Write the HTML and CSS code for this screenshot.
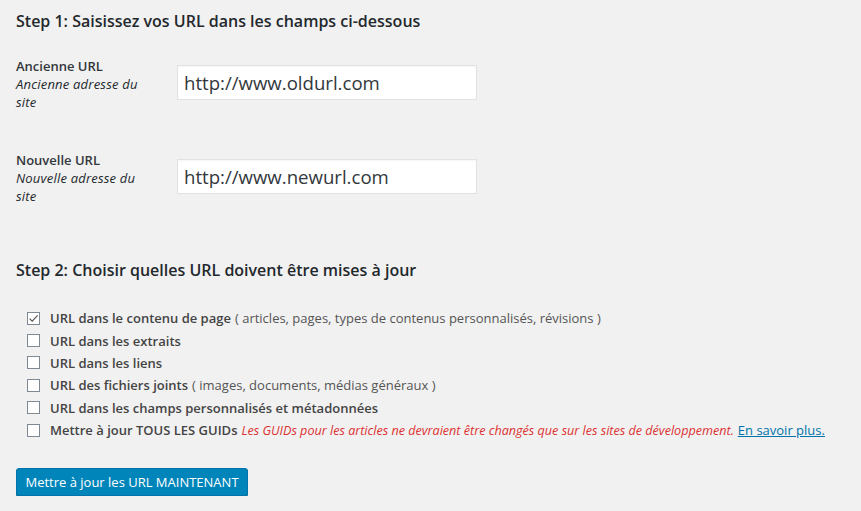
FILE: index.html
```html
<!DOCTYPE html>
<html lang="fr">
<head>
<meta charset="utf-8">
<title>Mise à jour des URL</title>
<link rel="stylesheet" href="styles.css">
</head>
<body>
<main class="page">
  <h2 class="step">Step 1: Saisissez vos URL dans les champs ci-dessous</h2>

  <div class="field">
    <div class="field-label">
      <span class="field-name">Ancienne URL</span>
      <span class="field-hint">Ancienne adresse du site</span>
    </div>
    <input class="url-input" type="text" value="http://www.oldurl.com">
  </div>

  <div class="field field-second">
    <div class="field-label">
      <span class="field-name">Nouvelle URL</span>
      <span class="field-hint">Nouvelle adresse du site</span>
    </div>
    <input class="url-input" type="text" value="http://www.newurl.com">
  </div>

  <h2 class="step step-two">Step 2: Choisir quelles URL doivent être mises à jour</h2>

  <ul class="options">
    <li class="option">
      <span class="box checked"><svg viewBox="0 0 13 13" width="13" height="13"><path d="M2.6 6.6 L5.2 9.2 L10.6 3.4" fill="none" stroke="#555" stroke-width="1.2"/></svg></span>
      <span class="opt-name">URL dans le contenu de page</span>
      <span class="opt-note">( articles, pages, types de contenus personnalisés, révisions )</span>
    </li>
    <li class="option">
      <span class="box"></span>
      <span class="opt-name">URL dans les extraits</span>
    </li>
    <li class="option">
      <span class="box"></span>
      <span class="opt-name">URL dans les liens</span>
    </li>
    <li class="option">
      <span class="box"></span>
      <span class="opt-name">URL des fichiers joints</span>
      <span class="opt-note">( images, documents, médias généraux )</span>
    </li>
    <li class="option">
      <span class="box"></span>
      <span class="opt-name">URL dans les champs personnalisés et métadonnées</span>
    </li>
    <li class="option">
      <span class="box"></span>
      <span class="opt-name">Mettre à jour TOUS LES GUIDs</span>
      <span class="opt-warn">Les GUIDs pour les articles ne devraient être changés que sur les sites de développement.</span>
      <a class="opt-link" href="#">En savoir plus.</a>
    </li>
  </ul>

  <button class="submit" type="button">Mettre à jour les URL MAINTENANT</button>
</main>
</body>
</html>
```

FILE: styles.css
```css
html, body {
  margin: 0;
  padding: 0;
  background: #f1f1f1;
}

body {
  font-family: "Open Sans", "Noto Sans", sans-serif;
  color: #444;
  font-size: 13px;
}

.page {
  padding: 10px 0 0 16px;
}

.step {
  margin: 0;
  font-size: 16px;
  line-height: 22px;
  font-weight: 600;
  color: #23282d;
}

.step-two {
  margin-top: 54px;
}

.field {
  display: flex;
  align-items: flex-start;
  margin-top: 25px;
}

.field-second {
  margin-top: 40px;
}

.field-label {
  width: 161px;
  flex: none;
  display: flex;
  flex-direction: column;
  line-height: 18px;
}

.field-name {
  font-weight: 600;
  color: #32373c;
}

.field-hint {
  font-style: italic;
  width: 132px;
  color: #23282d;
  letter-spacing: 0.2px;
}

.url-input {
  margin: 8px 0 0 0;
  box-sizing: border-box;
  width: 300px;
  height: 35px;
  padding: 0 6px;
  border: 1px solid #e2e2e2;
  background: #fff;
  box-shadow: inset 0 1px 2px rgba(0,0,0,0.04);
  font-family: "Open Sans", "Noto Sans", sans-serif;
  font-size: 18.6px;
  color: #32373c;
  outline: none;
}

.options {
  list-style: none;
  margin: 26px 0 0 0;
  padding: 0 0 0 11px;
}

.option {
  display: flex;
  align-items: center;
  height: 22.4px;
  white-space: nowrap;
}

.box {
  box-sizing: border-box;
  width: 13px;
  height: 13px;
  border: 1px solid #7e8993;
  background: #fff;
  margin-right: 10px;
  flex: none;
  display: flex;
}

.box svg {
  margin: -1px;
}

.opt-name {
  font-weight: 600;
  color: #444;
}

.opt-note {
  margin-left: 4px;
  color: #555;
}

.opt-warn {
  margin-left: 4px;
  font-style: italic;
  color: #dc3232;
  font-size: 12.6px;
}

.opt-link {
  margin-left: 4px;
  color: #0073aa;
  text-decoration: underline;
}

.submit {
  margin-top: 27px;
  display: block;
  height: 28px;
  width: 232px;
  padding: 0;
  border: 1px solid #0073aa;
  border-radius: 3px;
  background: #0085ba;
  color: #fff;
  font-family: "Open Sans", "Noto Sans", sans-serif;
  font-size: 13px;
  box-shadow: 0 1px 0 #006799;
}
```
